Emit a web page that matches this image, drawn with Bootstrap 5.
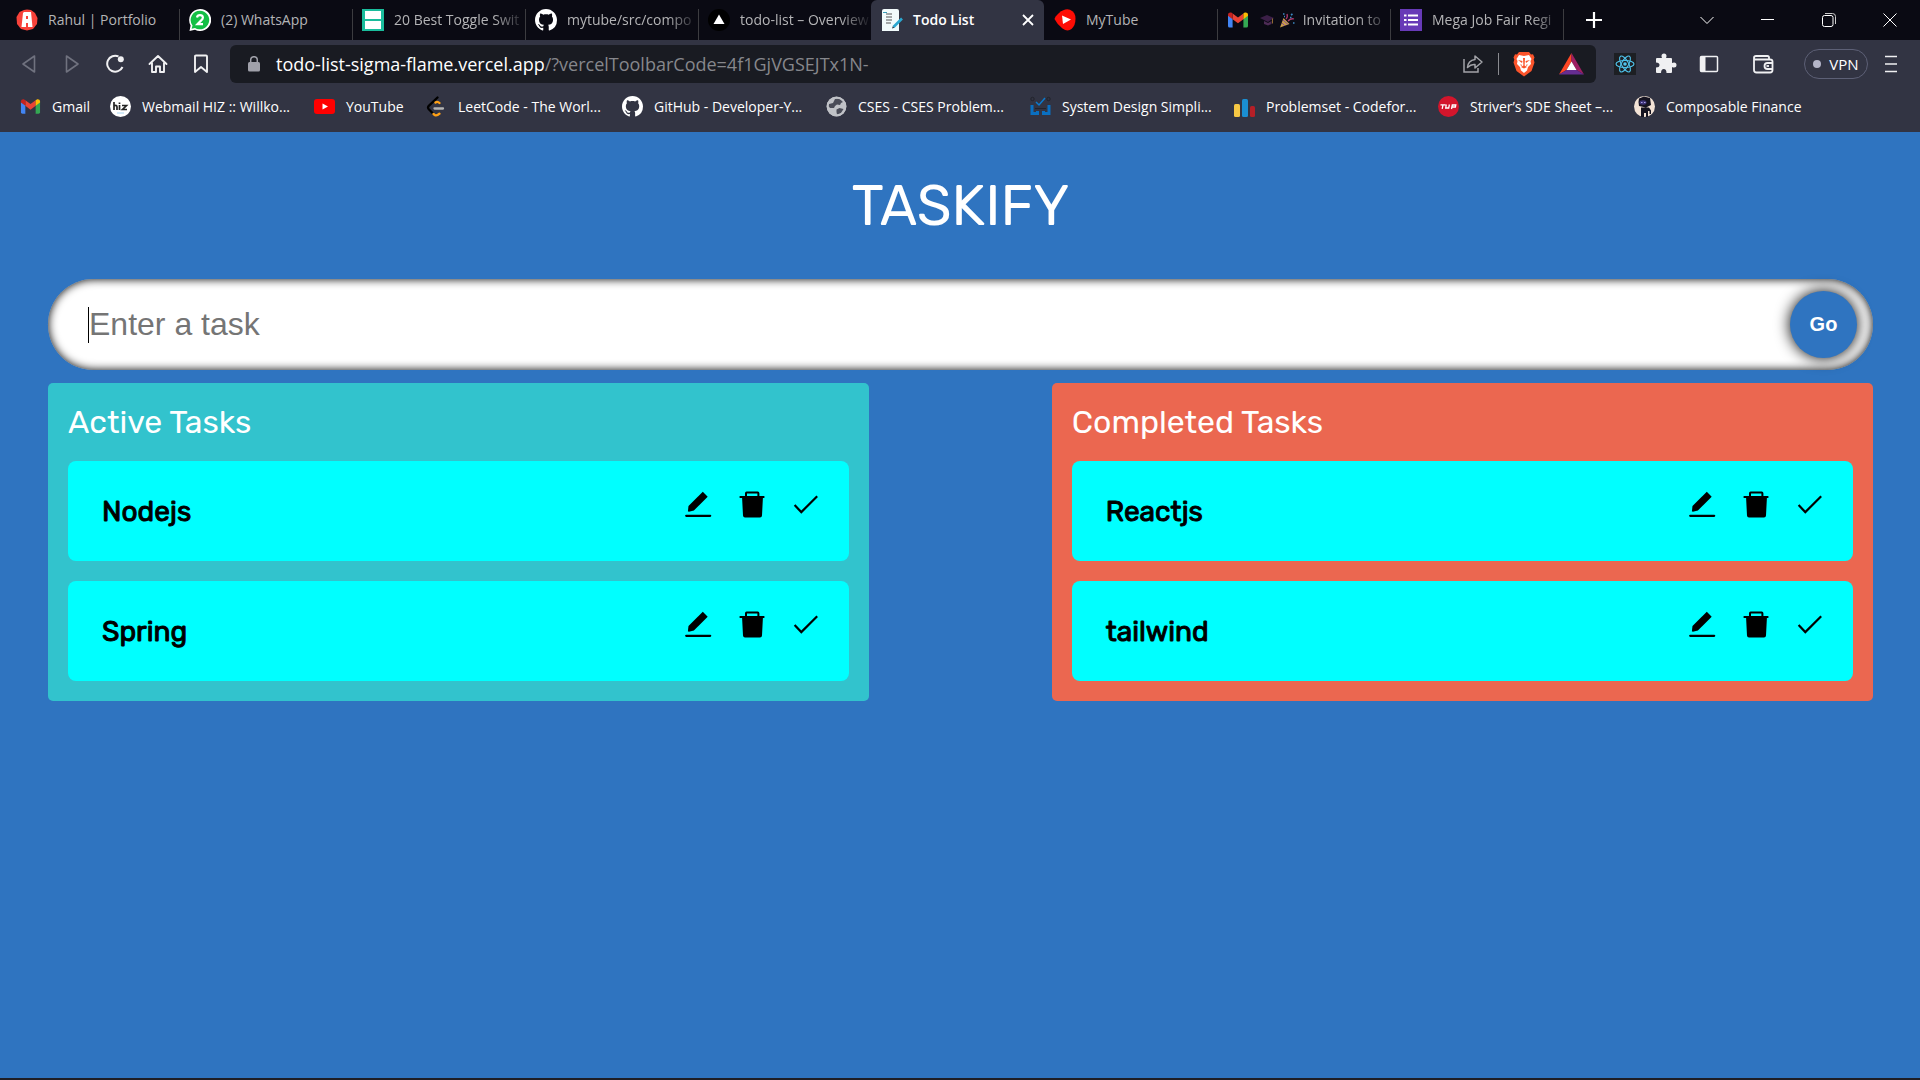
<!DOCTYPE html>
<html lang="en">
<head>
<meta charset="utf-8">
<meta name="viewport" content="width=device-width, initial-scale=1">
<title>Todo List</title>
<link href="https://cdn.jsdelivr.net/npm/bootstrap@5.3.0/dist/css/bootstrap.min.css" rel="stylesheet">
<style>
  :root { --ui: "Segoe UI", "Open Sans", "Noto Sans", sans-serif; --app: Rubik, Roboto, sans-serif; }
  body { background: #2f74c0; font-family: var(--app); border-bottom: 2px solid #1f1f26; }
  svg { display: block; flex: none; }
  button { background: none; border: 0; padding: 0; color: inherit; }

  /* browser chrome */
  .chrome { background: #323443; font-family: var(--ui); color: #fff; }
  .tab-strip { background: #0a0a13; height: 40px; padding-left: 6px; }
  .tab-item { flex: 0 0 173px; min-width: 0; height: 40px; padding: 0 10px; gap: 10px; font-size: 14px; color: #b4b4b6; position: relative; text-decoration: none; }
  .tab-item + .tab-item::before, .new-tab::before { content: ""; position: absolute; left: 0; top: 9px; bottom: 0; width: 1px; background: #3c3c40; }
  .tab-item.current { background: #323443; border-radius: 6px 6px 0 0; color: #fff; font-weight: 600; }
  .tab-item.current::before, .tab-item.current + .tab-item::before { display: none; }
  .tab-label { flex: 1; white-space: nowrap; line-height: 20px; padding-bottom: 1px; }
  .fade-end { -webkit-mask-image: linear-gradient(90deg, #000 100px, transparent 132px); mask-image: linear-gradient(90deg, #000 100px, transparent 132px); }
  .win-btn { width: 61px; height: 40px; display: flex; align-items: center; justify-content: center; flex: none; position: relative; }
  .toolbar { height: 48px; padding: 0 22px 0 7px; }
  .nav-btn { width: 43px; height: 38px; display: flex; align-items: center; justify-content: center; }
  .url-bar { background: #191b22; border-radius: 6px; height: 38px; font-size: 18px; padding: 0 12px 0 18px; margin: 0 14px 0 8px; }
  .url-text { color: #86878c; white-space: nowrap; outline: 0; }
  .url-text b { color: #fff; font-weight: 400; }
  .url-sep { width: 1px; height: 22px; margin: 0 14px; background: #8a8b90; }
  .wallet { margin: 0 16px 0 11px; }
  .vpn { border: 1px solid #5d6076; border-radius: 15px; width: 64px; height: 30px; font-size: 15px; }
  .vpn-dot { width: 8px; height: 8px; border-radius: 50%; background: #b4b5c8; }
  .bookmarks { height: 44px; padding: 0 20px 8px; font-size: 14px; }
  .bm { color: #fff; text-decoration: none; white-space: nowrap; display: flex; align-items: center; gap: 11px; flex: 0 1 204px; min-width: 0; }
  .bm-sm { flex-basis: 90px; }
  .bm-md { flex-basis: 112px; }
  .bm-lg { flex-basis: 196px; }

  /* app */
  .app { padding: 0 47px 0 48px; }
  .app-title { font-size: 56px; line-height: 66px; color: #fff; margin: 41px 0 40px; font-weight: 400; }
  .task-input { height: 91px; border: 0; border-radius: 50px; padding: 0 41px; font: 32px "Liberation Sans", Arial, sans-serif; box-shadow: inset 0 0 10px #000; outline: 0; color: #000; }
  .task-input::placeholder { color: #757575; }
  .caret { position: absolute; left: 40px; top: 28px; width: 1px; height: 36px; background: #000; }
  .go { position: absolute; right: 16px; top: 12px; width: 67px; height: 67px; border-radius: 50%; background: #2f74c0; color: #fff; font: bold 20px "Liberation Sans", Arial, sans-serif; box-shadow: 0 0 15px #000; }
  .panels { margin-top: 13px; }
  .panel { width: 45%; border-radius: 5px; padding: 20px; color: #fff; }
  .panel-title { font-size: 32px; line-height: 38px; margin: 0; padding-bottom: 20px; font-weight: 400; }
  .active-panel { background: #32c3cd; }
  .done-panel { background: #eb6750; }
  .task { background: #0ff; color: #000; border-radius: 8px; height: 100px; padding: 28px 28px 28px 34px; font-size: 28px; line-height: 46px; font-weight: 400; -webkit-text-stroke: 1px #000; }
  .task + .task { margin-top: 20px; }
  .task-actions { gap: 24px; }
</style>
</head>
<body class="d-flex flex-column min-vh-100">

<svg width="0" height="0" class="position-absolute" aria-hidden="true">
  <symbol id="i-edit" viewBox="0 0 30 30"><path d="M19.800 2.800 24.700 7.700 10.900 21.500 5.900 22.800 4.900 22.300 5.500 17.100z"/><path d="M3.200 26.800h24" stroke="#000" stroke-width="2.200" stroke-linecap="round"/></symbol>
  <symbol id="i-trash" viewBox="0 0 30 30"><path fill-rule="evenodd" d="M9.600 2.500h11.200q1.600 0 1.600 1.800V6.900H27.400v2H25.900L25 26.500q-.1 1.900-2 1.900H8q-1.900 0-2-1.900L5.100 8.900H2.600v-2H8V4.300Q8 2.500 9.600 2.500zm.4 2v2.400h10.400V4.500z"/></symbol>
  <symbol id="i-check" viewBox="0 0 30 30"><path d="M3.600 16.100 10.300 23.100 26.200 7.300" fill="none" stroke="#000" stroke-width="2.200"/></symbol>
  <symbol id="i-github" viewBox="0 0 16 16"><path fill="#fff" d="M8 0C3.580 0 0 3.580 0 8c0 3.540 2.290 6.530 5.470 7.590.4.070.55-.17.55-.38 0-.19-.01-.82-.01-1.490-2.010.37-2.530-.49-2.690-.94-.09-.23-.48-.94-.82-1.130-.28-.15-.68-.52-.01-.53.63-.01 1.080.58 1.230.82.72 1.210 1.870.87 2.330.66.07-.52.28-.87.51-1.070-1.780-.2-3.640-.89-3.640-3.950 0-.87.31-1.590.82-2.150-.08-.2-.36-1.020.08-2.120 0 0 .67-.21 2.200.82.64-.18 1.320-.27 2-.27s1.360.09 2 .27c1.530-1.040 2.200-.82 2.200-.82.44 1.100.16 1.920.08 2.120.51.56.82 1.270.82 2.150 0 3.070-1.870 3.750-3.650 3.950.29.25.54.73.54 1.480 0 1.070-.01 1.930-.01 2.200 0 .21.15.46.55.38A8.010 8.010 0 0 0 16 8c0-4.420-3.580-8-8-8z"/></symbol>
  <symbol id="i-gmail" viewBox="0 0 22 22"><path fill="#4285f4" d="M1 6v11q0 1.500 1.500 1.500H5.600V9.500z"/><path fill="#34a853" d="M21 6v11q0 1.500-1.500 1.500h-3.100V9.500z"/><path fill="#ea4335" d="M5.600 4.400 11 8.500l5.400-4.100v5.800L11 14.300 5.600 10.200z"/><path fill="#c5221f" d="M1 5.800C1 3.500 3.300 3 4.700 3.800l.9.700v5.700L1 6.800z"/><path fill="#fbbc04" d="M21 5.800c0-2.300-2.300-2.800-3.700-2l-.9.700v5.700L21 6.800z"/></symbol>
</svg>

<header class="chrome">
  <nav class="tab-strip d-flex align-items-center" aria-label="Tabs">
    <a href="#" class="tab-item d-flex align-items-center">
      <svg width="22" height="22" viewBox="0 0 22 22"><path fill="#f8423a" d="M11 .5 15 1l4 3 2.500 5-.5 6-4 5-6 1.500-6-1.500-4-5L.5 8l3-5L8 1z"/><path fill="#fff" fill-rule="evenodd" d="M8 3h7l1.500 15H12v-4h-2v4H5.500L7 4zM10 7v3h2V7z"/></svg>
      <span class="tab-label">Rahul | Portfolio</span></a>
    <a href="#" class="tab-item d-flex align-items-center">
      <svg width="22" height="22" viewBox="0 0 22 22"><path fill="#fff" d="M11 0a11 11 0 1 1-5 20.700L.5 22 1.600 16.500A11 11 0 0 1 11 0z"/><path fill="#13bf45" d="M11 1.700a9.300 9.300 0 1 1-5 17.200l-3.400.9.900-3.300A9.300 9.300 0 0 1 11 1.700z"/><path d="M8 8.500q.4-2.300 3-2.300t2.900 2.200q0 1.500-1.700 3L8.500 15.200H14" fill="none" stroke="#fff" stroke-width="2.200"/></svg>
      <span class="tab-label">(2) WhatsApp</span></a>
    <a href="#" class="tab-item d-flex align-items-center pe-0">
      <svg width="22" height="22" viewBox="0 0 22 22"><path fill="#1abc9c" d="M0 0h22v22H0z"/><path fill="#fff" d="M3 2h16v8H3zM3 12h16v8H3z"/></svg>
      <span class="tab-label fade-end">20 Best Toggle Swit</span></a>
    <a href="#" class="tab-item d-flex align-items-center pe-0">
      <svg width="22" height="22"><use href="#i-github"/></svg>
      <span class="tab-label fade-end">mytube/src/compo</span></a>
    <a href="#" class="tab-item d-flex align-items-center pe-0">
      <svg width="22" height="22" viewBox="0 0 22 22"><circle cx="11" cy="11" r="11"/><path fill="#fff" d="M11 5.500 16.500 15h-11z"/></svg>
      <span class="tab-label fade-end">todo-list – Overview</span></a>
    <a href="#" class="tab-item current d-flex align-items-center" aria-current="page">
      <svg width="22" height="22" viewBox="0 0 22 22"><path fill="#f2fbfc" d="M1 2q0-2 2-2h13q2 0 2 2v20H1z"/><path d="M5 5h6M5 8h6M5 11h6M5 14h5" stroke="#555" stroke-width="1.200"/><path d="M2 3.500h4" stroke="#3a9db8" stroke-width="1"/><path d="M12.500 18 21 9.500" stroke="#2ba7d0" stroke-width="2.600"/><path d="m11 19.500.8-2.300 1.600 1.500z" fill="#234"/></svg>
      <span class="tab-label">Todo List</span>
      <svg width="12" height="12" viewBox="0 0 12 12"><path d="m1 1 10 10M11 1 1 11" stroke="#fff" stroke-width="1.800"/></svg></a>
    <a href="#" class="tab-item d-flex align-items-center">
      <svg width="22" height="22" viewBox="0 0 22 22"><path fill="#fd0d05" d="M.5 10Q1 7.500 5 4 11-1 16 .8q5.500 2.200 5.500 9T17.500 20q-4 3-9-.5T.5 10z"/><path fill="#fff" d="m8 6.500 9 4-8 4.500z"/></svg>
      <span class="tab-label">MyTube</span></a>
    <a href="#" class="tab-item d-flex align-items-center pe-0">
      <svg width="22" height="22"><use href="#i-gmail"/></svg>
      <span class="tab-label fade-end d-flex align-items-center"><svg width="16" height="16" viewBox="0 0 16 16" class="me-1"><path fill="#3b1f47" d="m1 6 7-3 7 3-6 4z"/><path fill="#4d2b55" d="M5 9l4 2 3.500-2v3L9 13.500 5 12z"/><path d="M13.500 6.500v5" stroke="#8f6a32"/></svg><svg width="16" height="16" viewBox="0 0 16 16" class="me-1"><path fill="#c79b4b" d="M1 15.500 4.500 6l6 6z"/><path d="M3 11l3 3M4 8l5 4.500" stroke="#8a4f8f"/><path d="M7 7q2-2 1-5M9 9q3-3 6-2" stroke="#b03a6e" fill="none" stroke-width="1.300"/><path d="M4 2h1.500M12 3l1.500-1M14 11h1.500M11 5.500h1.500M5 4.500h1" stroke="#3c89c4" stroke-width="1.600"/></svg>&nbsp;Invitation to</span></a>
    <a href="#" class="tab-item d-flex align-items-center pe-0">
      <svg width="22" height="22" viewBox="0 0 22 22"><path fill="#673ab7" d="M0 0h22v22H0z"/><path d="M8 6.500h10M8 11h10M8 15.500h10M4 6.500h2.500M4 11h2.500M4 15.500h2.500" stroke="#fff" stroke-width="2.200"/></svg>
      <span class="tab-label fade-end">Mega Job Fair Regi</span></a>
    <button class="win-btn new-tab" aria-label="New tab"><svg width="16" height="16" viewBox="0 0 16 16"><path d="M8 0v16M0 8h16" stroke="#fff" stroke-width="2.200"/></svg></button>
    <div class="d-flex ms-auto">
      <button class="win-btn" aria-label="Search tabs"><svg width="14" height="14" viewBox="0 0 14 14"><path d="m.5 4 6.500 6.500L13.500 4" fill="none" stroke="#fff"/></svg></button>
      <button class="win-btn" aria-label="Minimize"><svg width="14" height="14" viewBox="0 0 14 14"><path d="M0 6.500h13" stroke="#fff"/></svg></button>
      <button class="win-btn" aria-label="Restore"><svg width="14" height="14" viewBox="0 0 14 14"><rect x=".5" y="2.500" width="10.500" height="11" rx="2" fill="none" stroke="#fff"/><path d="M3 .5h7.500q3 0 3 3V11" fill="none" stroke="#ccc"/></svg></button>
      <button class="win-btn" aria-label="Close"><svg width="14" height="14" viewBox="0 0 14 14"><path d="m.5.5 13 13M13.500.5l-13 13" stroke="#fff"/></svg></button>
    </div>
  </nav>

  <div class="toolbar d-flex align-items-center">
    <div class="d-flex">
      <button class="nav-btn" aria-label="Back"><svg width="16" height="20" viewBox="0 0 16 20"><path d="M13.500 2v16L2 10z" fill="none" stroke="#70727f" stroke-width="1.600" stroke-linejoin="round"/></svg></button>
      <button class="nav-btn" aria-label="Forward"><svg width="16" height="20" viewBox="0 0 16 20"><path d="M2.500 2v16L14 10z" fill="none" stroke="#70727f" stroke-width="1.600" stroke-linejoin="round"/></svg></button>
      <button class="nav-btn" aria-label="Reload"><svg width="20" height="20" viewBox="0 0 20 20"><path d="M13.500 2.400A8 8 0 1 0 17.500 13" fill="none" stroke="#f0f0f2" stroke-width="2"/><circle cx="15.800" cy="5.200" r="3" fill="#f0f0f2"/></svg></button>
      <button class="nav-btn" aria-label="Home"><svg width="20" height="20" viewBox="0 0 20 20"><path d="M1.500 10 10 2l8.500 8M4 9v9h4v-5.500h4V18h4V9" fill="none" stroke="#f0f0f2" stroke-width="1.900" stroke-linejoin="round" stroke-linecap="round"/></svg></button>
      <button class="nav-btn" aria-label="Bookmark"><svg width="16" height="20" viewBox="0 0 16 20"><path d="M2 2.500Q2 1.500 3 1.500h10q1 0 1 1V18l-6-5-6 5z" fill="none" stroke="#f0f0f2" stroke-width="1.900" stroke-linejoin="round"/></svg></button>
    </div>
    <div class="url-bar flex-grow-1 d-flex align-items-center overflow-hidden">
      <svg width="12" height="16" viewBox="0 0 12 16" class="me-3"><rect y="6" width="12" height="9.500" rx="1.500" fill="#a0a1aa"/><path d="M2.700 7V4a3.300 3.300 0 0 1 6.600 0v3" fill="none" stroke="#a0a1aa" stroke-width="1.500"/></svg>
      <span class="url-text flex-grow-1" role="textbox" contenteditable="true" spellcheck="false" aria-label="Address"><b>todo-list-sigma-flame.vercel.app</b>/?vercelToolbarCode=4f1GjVGSEJTx1N-</span>
      <button aria-label="Share"><svg width="22" height="20" viewBox="0 0 22 20"><path d="M2 5v13h14v-4" fill="none" stroke="#a2a3a8" stroke-width="1.500"/><path d="M13 2l7 6-7 6v-3.500q-4-.5-7.500 3Q6 6.500 13 5.500z" fill="none" stroke="#a2a3a8" stroke-width="1.500" stroke-linejoin="round"/></svg></button>
      <span class="url-sep"></span>
      <button aria-label="Brave Shields"><svg width="22" height="26" viewBox="0 0 22 26"><path fill="#fb542b" d="M6 1h10l2 2.500 2-.3 1.500 3.300-.8 2 .8 3-3 8.500L11 25.500 3.500 20 .5 11.500l.8-3-.8-2L2 3.200l2 .3z"/><path fill="#fff" d="M11 5l5-1 2.500 4-1 2 .5 3-3 3-1 3.500-3 2.500-3-2.500-1-3.500-3-3 .5-3-1-2L6 4z"/><path fill="#fb542b" d="m5 9 4.500 1L9 12zM17 9l-4.500 1 .5 2zM10 7h2l-.4 7.500 2.400 1.500-3 1.500L8 16l2.400-1.500zM7.500 13l1.500 1-1 1.500zM14.500 13 13 14l1 1.500z"/></svg></button>
      <button class="ms-4" aria-label="Rewards"><svg width="25" height="22" viewBox="0 0 25 22"><path fill="#ff4724" d="M12.500 0v8.500l-5 8.500L0 21.500z"/><path fill="#9e1f63" d="M12.500 0 25 21.500 17.500 17l-5-8.500z"/><path fill="#662d91" d="M0 21.500 7.500 17h10l7.500 4.500z"/><path fill="#fff" d="m12.500 8.500 5 8.500h-10z"/></svg></button>
    </div>
    <div class="d-flex align-items-center">
      <button class="me-1 px-1" aria-label="React Developer Tools"><svg width="22" height="22" viewBox="0 0 22 22" fill="none" stroke="#4fc3ec" stroke-width="1.100"><path fill="#1d1f23" stroke="none" d="M0 0h22v22H0z"/><g transform="translate(11 11)"><ellipse rx="9" ry="3.500"/><ellipse rx="9" ry="3.500" transform="rotate(60)"/><ellipse rx="9" ry="3.500" transform="rotate(120)"/><circle r="1.800" fill="#4fc3ec" stroke="none"/></g></svg></button>
      <button class="nav-btn" aria-label="Extensions"><svg width="22" height="22" viewBox="0 0 22 22"><path fill="#f0f0f2" d="M3 5h5q-.5-1-.5-2a2.500 2.500 0 0 1 5 0q0 1-.5 2h5q1 0 1 1v4q1-.5 2-.5a2.500 2.500 0 0 1 0 5q-1 0-2-.5v5q0 1-1 1h-4.500q0-4-2.700-4T7 20H3q-1 0-1-1v-4.500q3.500 0 3.500-2.500T2 9.500V6q0-1 1-1z" transform="translate(-1 0)"/></svg></button>
      <button class="nav-btn" aria-label="Sidebar"><svg width="20" height="20" viewBox="0 0 20 20"><rect x="1.500" y="2.500" width="17" height="15" rx="1" fill="none" stroke="#f0f0f2" stroke-width="1.500"/><path fill="#f0f0f2" d="M1.500 2.500h5v15h-5z"/></svg></button>
      <button class="nav-btn wallet" aria-label="Wallet"><svg width="22" height="20" viewBox="0 0 22 20" fill="none" stroke="#f0f0f2" stroke-width="1.800"><path d="M17 5V3.500Q17 2 15.500 2H4Q2 2 2 3.800T4 5.500H18q2.500 0 2.500 2V16q0 2.500-2.500 2.500H4.500Q2 18.500 2 16V3.800M20.500 9h-5a3 3 0 0 0 0 6h5"/><path d="M14.500 12H17"/></svg></button>
      <button class="vpn d-flex align-items-center justify-content-center gap-2 ms-1" aria-label="VPN"><span class="vpn-dot"></span>VPN</button>
      <button class="ps-3" aria-label="Menu"><svg width="14" height="18" viewBox="0 0 14 18"><path d="M1 1.500h12M1 9h12M1 16.500h12" stroke="#f0f0f2" stroke-width="1.700"/></svg></button>
    </div>
  </div>

  <nav class="bookmarks d-flex align-items-center" aria-label="Bookmarks">
    <a href="#" class="bm bm-sm"><svg width="21" height="21"><use href="#i-gmail"/></svg>Gmail</a>
    <a href="#" class="bm"><svg width="21" height="21" viewBox="0 0 21 21"><circle cx="10.500" cy="10.500" r="10.500" fill="#fff"/><path d="M4 6v8M4 10q3-1.500 3 1v3M9.500 9v5M9.500 6.500V8M12 9.500h4.500L12.500 13.500H17" fill="none" stroke="#222" stroke-width="1.700"/><path d="M7 17h7" stroke="#a5d4f2"/></svg>Webmail HIZ :: Willko...</a>
    <a href="#" class="bm bm-md"><svg width="21" height="21" viewBox="0 0 21 21"><rect y="3" width="21" height="15" rx="3" fill="#f00"/><path fill="#fff" d="m8.500 7.500 5.500 3-5.500 3z"/></svg>YouTube</a>
    <a href="#" class="bm bm-lg"><svg width="21" height="21" viewBox="0 0 21 21" fill="none" stroke-linecap="round" stroke-width="2.300"><path d="M11.500 1.500 2.800 9.800q-1.500 1.700 0 3.400L7 17.500" stroke="#000"/><path d="m7.500 18 1.500 1.200q2 .8 4.500-1.500M9.500 6.500q2-1.500 4 .5" stroke="#ffa116"/><path d="M8.500 12.500h8.500" stroke="#b3b3b3"/></svg>LeetCode - The Worl...</a>
    <a href="#" class="bm"><svg width="21" height="21"><use href="#i-github"/></svg>GitHub - Developer-Y...</a>
    <a href="#" class="bm"><svg width="21" height="21" viewBox="0 0 21 21"><circle cx="10.500" cy="10.500" r="9.800" fill="#c0c2c7"/><path fill="#4a4c58" d="M9 3q5-1.500 8 3l-2 1-1 2-3-.5L9 10l-1 2H4l-1.500-2L3 8l4-1zM10.500 13.500l3-1.500 4 1-2.500 4-4 1.500-.5-2.500z"/><circle cx="10.500" cy="10.500" r="9" fill="none" stroke="#c0c2c7" stroke-width="1.800"/></svg>CSES - CSES Problem...</a>
    <a href="#" class="bm"><svg width="21" height="21" viewBox="0 0 21 21"><path d="M2 9v8.500h5.500V15M19 9v8.500h-5.500V15" fill="none" stroke="#0a6fc0" stroke-width="3"/><path d="m6 6 3 3 6-7" fill="none" stroke="#0a7bd0" stroke-width="1.500"/><circle cx="2.500" cy="3" r="1.700" fill="none" stroke="#22232b"/><circle cx="18.500" cy="3" r="1.700" fill="none" stroke="#22232b"/><path d="M5 12.500h11" stroke="#22232b"/></svg>System Design Simpli...</a>
    <a href="#" class="bm"><svg width="21" height="21" viewBox="0 0 21 21"><rect y="8" width="6" height="13" rx="1.500" fill="#f6c744"/><rect x="8" y="3" width="6" height="18" rx="1.500" fill="#1a8fd2"/><rect x="16" y="10" width="5" height="11" rx="1.500" fill="#b51f27"/></svg>Problemset - Codefor...</a>
    <a href="#" class="bm bm-lg"><svg width="21" height="21" viewBox="0 0 21 21"><circle cx="10.500" cy="10.500" r="10.500" fill="#d3152c"/><path d="M2.500 8.800h5M5 8.800l-.8 4M8.300 8.500l-.6 3.500h3l.7-3.500M13.500 13l.8-4h3.500l-.4 2h-3.500" fill="none" stroke="#fff" stroke-width="1.300"/></svg>Striver’s SDE Sheet –...</a>
    <a href="#" class="bm"><svg width="21" height="21" viewBox="0 0 21 21"><circle cx="10.500" cy="10.500" r="10.500" fill="#f3e3d6"/><path fill="#151320" d="M5 2.500 10 .5l6 1.500 1 7-5 2.500-7-1.500-.5-4zM7 11.500h8l2 3V18h-1.500v-3L14 15v6H12v-4h-2v4H7z"/><ellipse cx="9" cy="6.500" rx="3.500" ry="2.200" fill="#3d3277"/><path d="M7 6.500h1.500M10 6.500h1.500" stroke="#a7a0e8"/></svg>Composable Finance</a>
  </nav>
</header>

<main class="app flex-grow-1">
  <h1 class="app-title text-center">TASKIFY</h1>
  <form class="position-relative">
    <input type="text" class="task-input w-100 d-block" placeholder="Enter a task" aria-label="Enter a task">
    <span class="caret"></span>
    <button type="button" class="go">Go</button>
  </form>

  <div class="panels d-flex justify-content-between align-items-start">
    <section class="panel active-panel">
      <h2 class="panel-title">Active Tasks</h2>
      <div class="task d-flex justify-content-between"><span>Nodejs</span>
        <div class="task-actions d-flex align-items-start"><button aria-label="Edit"><svg width="30" height="30"><use href="#i-edit"/></svg></button><button aria-label="Delete"><svg width="30" height="30"><use href="#i-trash"/></svg></button><button aria-label="Done"><svg width="30" height="30"><use href="#i-check"/></svg></button></div>
      </div>
      <div class="task d-flex justify-content-between"><span>Spring</span>
        <div class="task-actions d-flex align-items-start"><button aria-label="Edit"><svg width="30" height="30"><use href="#i-edit"/></svg></button><button aria-label="Delete"><svg width="30" height="30"><use href="#i-trash"/></svg></button><button aria-label="Done"><svg width="30" height="30"><use href="#i-check"/></svg></button></div>
      </div>
    </section>
    <section class="panel done-panel">
      <h2 class="panel-title">Completed Tasks</h2>
      <div class="task d-flex justify-content-between"><span>Reactjs</span>
        <div class="task-actions d-flex align-items-start"><button aria-label="Edit"><svg width="30" height="30"><use href="#i-edit"/></svg></button><button aria-label="Delete"><svg width="30" height="30"><use href="#i-trash"/></svg></button><button aria-label="Done"><svg width="30" height="30"><use href="#i-check"/></svg></button></div>
      </div>
      <div class="task d-flex justify-content-between"><span>tailwind</span>
        <div class="task-actions d-flex align-items-start"><button aria-label="Edit"><svg width="30" height="30"><use href="#i-edit"/></svg></button><button aria-label="Delete"><svg width="30" height="30"><use href="#i-trash"/></svg></button><button aria-label="Done"><svg width="30" height="30"><use href="#i-check"/></svg></button></div>
      </div>
    </section>
  </div>
</main>

<script src="https://cdn.jsdelivr.net/npm/bootstrap@5.3.0/dist/js/bootstrap.bundle.min.js"></script>
</body>
</html>
